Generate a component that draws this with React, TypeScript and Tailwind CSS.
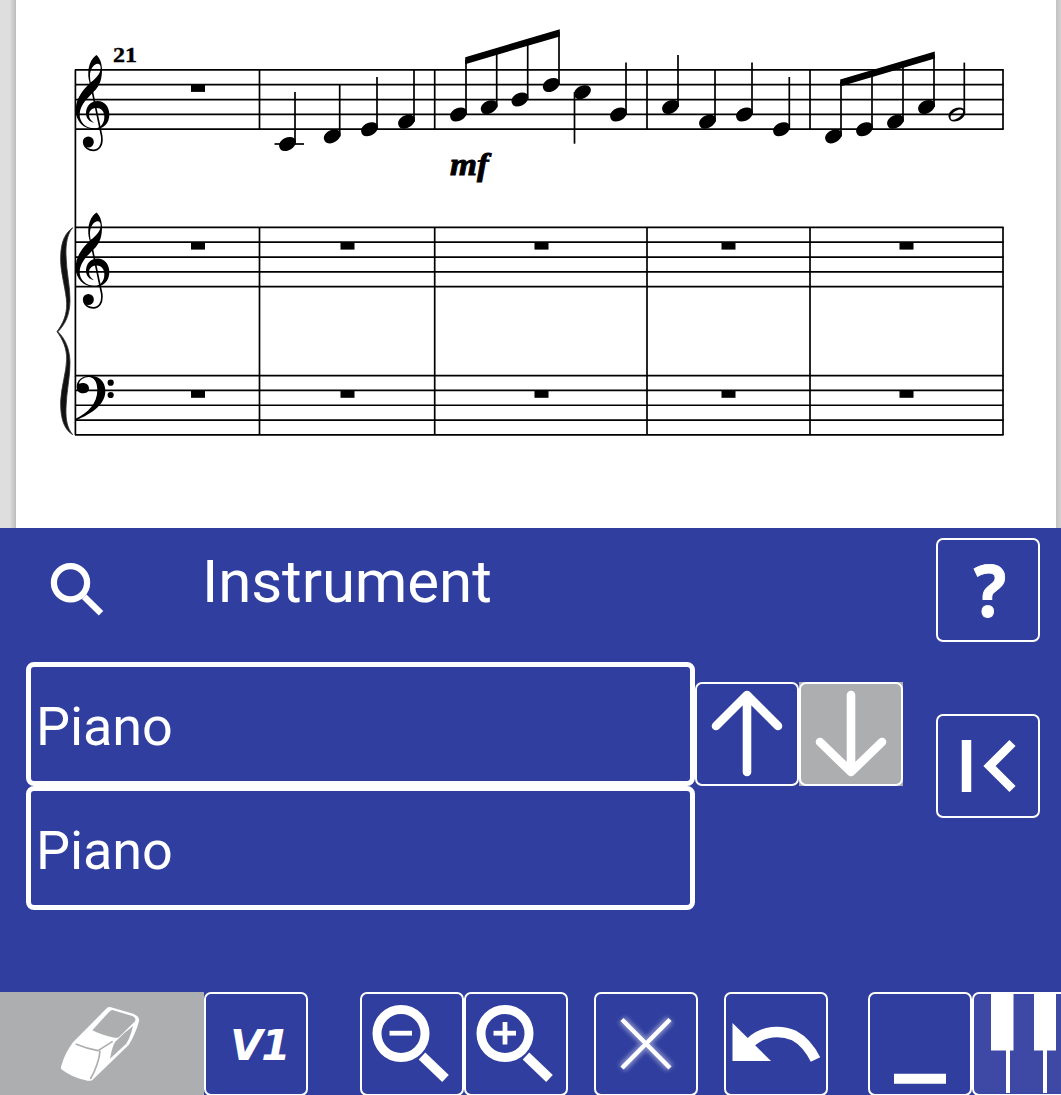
import type { ReactNode } from "react";

const STAFF_TOPS = [69.9, 227.4, 375.6];
const GAP = 14.82;
const BARS = [259.5, 434.7, 647, 810, 1003];
const RESTS = [191, 340.5, 534.5, 721.5, 899.5];

// [head x, head y, stem x, stem end y]
const NOTES: [number, number, number, number][] = [
  [287.3, 144, 295, 92],
  [332, 136.4, 339.7, 85],
  [369.3, 129.3, 377, 77],
  [406.3, 121.7, 414, 70],
  [458.3, 114.6, 466, 60],
  [489, 107.2, 496.7, 51],
  [519.7, 99.6, 527.7, 42],
  [551, 85, 559, 32],
  [582.3, 92.2, 574.5, 143.7],
  [618.3, 114.6, 626, 62.6],
  [670.3, 107, 678, 55],
  [707.3, 121.7, 715, 70],
  [744.3, 114.6, 752, 62.6],
  [781.3, 129.3, 789.3, 77],
  [833.3, 136.4, 841, 82],
  [864.3, 129.3, 872, 73],
  [895.3, 121.7, 903, 64],
  [926.3, 107, 934, 55],
];

const HEAD = "M-7.9 3.2C-9.6 -1.2 -4 -7 2.6 -7C6.2 -7 8.4 -5.4 8.6 -2.6C8.8 2 3.4 7 -2.8 7C-5.6 7 -7.3 5.6 -7.9 3.2Z";

function TrebleClef({ y }: { y: number }) {
  return (
    <g transform={`translate(50 ${y}) scale(0.33333)`}>
      <path
        fillRule="evenodd"
        d="M139 45C149 52 156 70 156 88C156 118 150 134 137 149C118 170 91 190 89 222C88 246 107 265 133 265C152 265 163 250 163 230C163 213 153 204 140 204C126 204 117 212 117 225C117 236 124 243 132 248C118 246 108 235 108 220C108 199 122 183 143 183C163 183 178 200 178 224C178 250 160 268 134 268C101 268 77 244 77 211C77 186 87 167 103 147L119 130C114 112 114 100 116 85C119 67 127 54 139 45ZM122 127C138 116 152 100 152 84C152 76 149 71 143 71C132 71 120 88 120 106C120 115 121 121 122 127Z"
      />
      <path d="M127 155L155 288C159 319 145 331 130 331C115 331 106 324 102 313" fill="none" stroke="#000" strokeWidth="5" />
      <circle cx="115" cy="306" r="16.5" />
    </g>
  );
}

function Score() {
  return (
    <svg width="1061" height="528" viewBox="0 0 1061 528" className="block">
      <g stroke="#000" strokeWidth="1.7">
        {STAFF_TOPS.map((t) =>
          [0, 1, 2, 3, 4].map((i) => <line key={`${t}-${i}`} x1="75" x2="1003.6" y1={t + i * GAP} y2={t + i * GAP} />)
        )}
        <line x1="75.4" x2="75.4" y1="69.5" y2="435" />
        {BARS.map((x) => (
          <g key={x}>
            <line x1={x} x2={x} y1="69.5" y2="129.5" />
            <line x1={x} x2={x} y1="227" y2="435" />
          </g>
        ))}
        <line x1="274.5" x2="304" y1="144" y2="144" />
        {NOTES.map(([, hy, sx, sy]) => (
          <line key={sx} x1={sx} x2={sx} y1={hy} y2={sy} />
        ))}
        <line x1="964.3" x2="964.3" y1="113" y2="62.6" />
      </g>
      {NOTES.map(([x, y]) => (
        <path key={x} d={HEAD} transform={`translate(${x} ${y})`} />
      ))}
      <g transform="translate(956.7 114.6)">
        <path
          fillRule="evenodd"
          d={HEAD + "M-6.2 2.6C-6 -0.8 -0.8 -4.8 3.2 -5.2C5.4 -5.3 6.6 -4.2 6.4 -2.8C6 0.6 0.6 4.8 -3.4 5.2C-5.2 5.3 -6.2 4.2 -6.2 2.6Z"}
        />
      </g>
      <polygon points="465.2,57.2 559.8,29.2 559.8,36.4 465.2,64.2" />
      <polygon points="840.2,79.6 934.8,51.4 934.8,58.6 840.2,86.4" />
      {RESTS.map((x, i) => (
        <g key={x}>
          {i === 0 && <rect x={x} y="84.7" width="14" height="7.2" />}
          <rect x={x} y="242.3" width="14" height="7.3" />
          <rect x={x} y="390.5" width="14" height="7.3" />
        </g>
      ))}
      <TrebleClef y={40} />
      <TrebleClef y={197.5} />
      <g transform="translate(40 200) scale(0.33333)">
        <path d="M107 656C145 638 172 610 172 570C172 546 162 531 146 531C131 531 119 540 117 551C135 546 147 553 147 566C147 575 138 580 128 580C116 580 110 570 110 560C110 540 128 527 149 527C177 527 196 544 196 573C196 612 158 640 108 661Z" />
        <circle cx="212" cy="548" r="9.3" />
        <circle cx="212" cy="585" r="9.3" />
        <path
          fill="#111"
          stroke="#333"
          strokeWidth="2.5"
          d="M98 83C82 102 77 130 78 165C79 215 91 262 90 303C89 345 76 372 54 395C76 418 89 445 90 487C91 528 79 575 78 625C77 660 82 685 98 704C68 686 61 645 62 603C64 560 79 515 80 480C81 445 68 418 51 395C68 372 81 345 80 310C79 275 64 228 62 185C61 140 68 104 98 83Z"
        />
      </g>
      <text x="113" y="62" fontFamily="Liberation Serif, serif" fontWeight="700" fontSize="20" textLength="24" lengthAdjust="spacingAndGlyphs" stroke="#000" strokeWidth="0.4">
        21
      </text>
      <text x="450" y="175" fontFamily="Liberation Serif, serif" fontWeight="700" fontStyle="italic" fontSize="32" textLength="38.5" lengthAdjust="spacingAndGlyphs" stroke="#000" strokeWidth="0.9">
        mf
      </text>
    </svg>
  );
}

function Tool({ children, className = "" }: { children?: ReactNode; className?: string }) {
  return (
    <button className={`flex h-[104px] w-[104px] shrink-0 items-center justify-center overflow-hidden rounded-[7px] border-2 border-white ${className}`}>
      {children}
    </button>
  );
}

function Icon({ children, soft = false }: { children: ReactNode; soft?: boolean }) {
  return (
    <svg viewBox="2 2 100 100" width="100" height="100" fill="none" stroke="#fff" className={soft ? "shrink-0 blur-[0.7px]" : "shrink-0"}>
      {children}
    </svg>
  );
}

function Magnifier({ plus }: { plus?: boolean }) {
  return (
    <Icon soft>
      <circle cx="41" cy="41.5" r="24" strokeWidth="9" />
      <path d="M62 64L85.5 86.5" strokeWidth="9.5" />
      <path d="M29.5 41.2H52" strokeWidth="4.8" />
      {plus && <path d="M41 30V52.5" strokeWidth="4.8" />}
    </Icon>
  );
}

function Part({ name }: { name: string }) {
  return (
    <div className="flex h-[124px] w-[669px] items-center rounded-[8px] border-[5px] border-white pl-[5px] text-[54px] leading-none">
      <span className="relative top-[3px] tracking-[-0.1px]">{name}</span>
    </div>
  );
}

export default function App() {
  return (
    <div className="flex h-[1095px] w-[1061px] flex-col overflow-hidden bg-[#303e9f] font-['Roboto',sans-serif] text-white">
      <div className="flex h-[528px] shrink-0 bg-white">
        <div className="h-full w-4 shrink-0 bg-linear-to-r from-[#dedede] from-60% to-[#bcbcbc]" />
        <div className="-ml-4 h-full w-[1056px] shrink-0">
          <Score />
        </div>
        <div className="h-full w-[5px] shrink-0 bg-linear-to-r from-[#c2c2c2] to-[#d2d2d2]" />
      </div>

      <div className="flex h-[464px] shrink-0 justify-between pr-[21px]">
        <div className="flex flex-col">
          <header className="flex h-[134px] items-start">
            <svg width="56" height="56" viewBox="0 0 56 56" fill="none" stroke="#fff" className="mt-[33px] ml-[49px]">
              <circle cx="21.5" cy="21.7" r="16.6" strokeWidth="6.2" />
              <path d="M35.2 35.7L52 52.3" strokeWidth="6.4" />
            </svg>
            <h1 className="mt-[19px] ml-[97px] text-[60px] leading-[70px] tracking-[-0.1px]">Instrument</h1>
          </header>
          <div className="flex pl-[26px]">
            <div>
              <Part name="Piano" />
              <Part name="Piano" />
            </div>
            <div className="flex pt-5">
              <Tool>
                <Icon>
                  <path d="M52 90V13M21 44L52 13L83 44" strokeWidth="8.6" strokeLinecap="round" strokeLinejoin="round" />
                </Icon>
              </Tool>
              <div className="h-[104px] bg-[#adaeb0]">
                <Tool>
                  <Icon>
                    <path d="M52 13V90M21 60L52 90L83 60" strokeWidth="8.6" strokeLinecap="round" strokeLinejoin="round" />
                  </Icon>
                </Tool>
              </div>
            </div>
          </div>
        </div>
        <div className="flex flex-col gap-[72px] pt-[10px]">
          <Tool className="font-['Open_Sans',sans-serif] text-[72px] leading-none font-bold">
            <span className="relative -top-px left-[2px] scale-x-[0.95] blur-[0.7px] [-webkit-text-stroke:0.8px_white]">?</span>
          </Tool>
          <Tool>
            <Icon soft>
              <path d="M30.5 26V78" strokeWidth="9.5" />
              <path d="M76.5 29L53.5 52L76.5 75" strokeWidth="8.7" />
            </Icon>
          </Tool>
        </div>
      </div>

      <footer className="flex h-[103px] shrink-0">
        <div className="flex h-[103px] w-[204px] shrink-0 bg-[#adaeb0]">
          <svg width="204" height="103" viewBox="0 36 612 309">
            <path
              fill="#fff"
              d="M330 81L400 101Q420 110 417 124C410 150 399 175 386 195L278 299Q272 304 262 302C235 297 207 285 184 268Q181 264 184 257C192 230 204 207 219 187L317 88Q323 80 330 81Z"
            />
            <path
              fill="#adaeb0"
              d="M337 90L397 108Q410 114 405 124L358 170Q352 175 343 173C318 168 295 161 277 151L325 98Q331 90 337 90ZM399 138C393 164 386 181 378 192L330 236C335 210 340 193 346 185Q372 158 399 138Z"
            />
            <path fill="none" stroke="#adaeb0" strokeWidth="5" d="M227 192C251 202 272 208 294 212L338 184M300 212C299 232 288 270 271 297" />
          </svg>
        </div>
        <Tool className="font-['DejaVu_Sans',sans-serif] text-[42px] leading-none font-bold italic">
          <span className="relative top-[2px] left-[3.5px] tracking-[-1.5px]">V1</span>
        </Tool>
        <Tool className="ml-[52px]">
          <Magnifier />
        </Tool>
        <Tool>
          <Magnifier plus />
        </Tool>
        <Tool className="ml-[26px]">
          <Icon>
            <path d="M28 27.5L76 76M76 27.5L28 76" strokeWidth="9" className="opacity-40 blur-[2px]" />
            <path d="M28 27.5L76 76M76 27.5L28 76" strokeWidth="4.4" className="blur-[0.4px]" />
          </Icon>
        </Tool>
        <Tool className="ml-[26px]">
          <Icon soft>
            <path d="M8.5 31V69H47Z" fill="#fff" stroke="none" />
            <path d="M26 51C39 38 57 38 70 43.5Q83 50.5 91.5 67.5" strokeWidth="10.5" />
          </Icon>
        </Tool>
        <Tool className="ml-10">
          <Icon soft>
            <path d="M26 86.8H78" strokeWidth="10" />
          </Icon>
        </Tool>
        <Tool className="bg-[#3e49a5]">
          <Icon>
            <path d="M19 0H41.5V58.5H19ZM62 0H84V58.5H62Z" fill="#fff" stroke="none" />
            <path d="M36 58V101M73 58V101" strokeWidth="4" />
          </Icon>
        </Tool>
      </footer>
    </div>
  );
}
